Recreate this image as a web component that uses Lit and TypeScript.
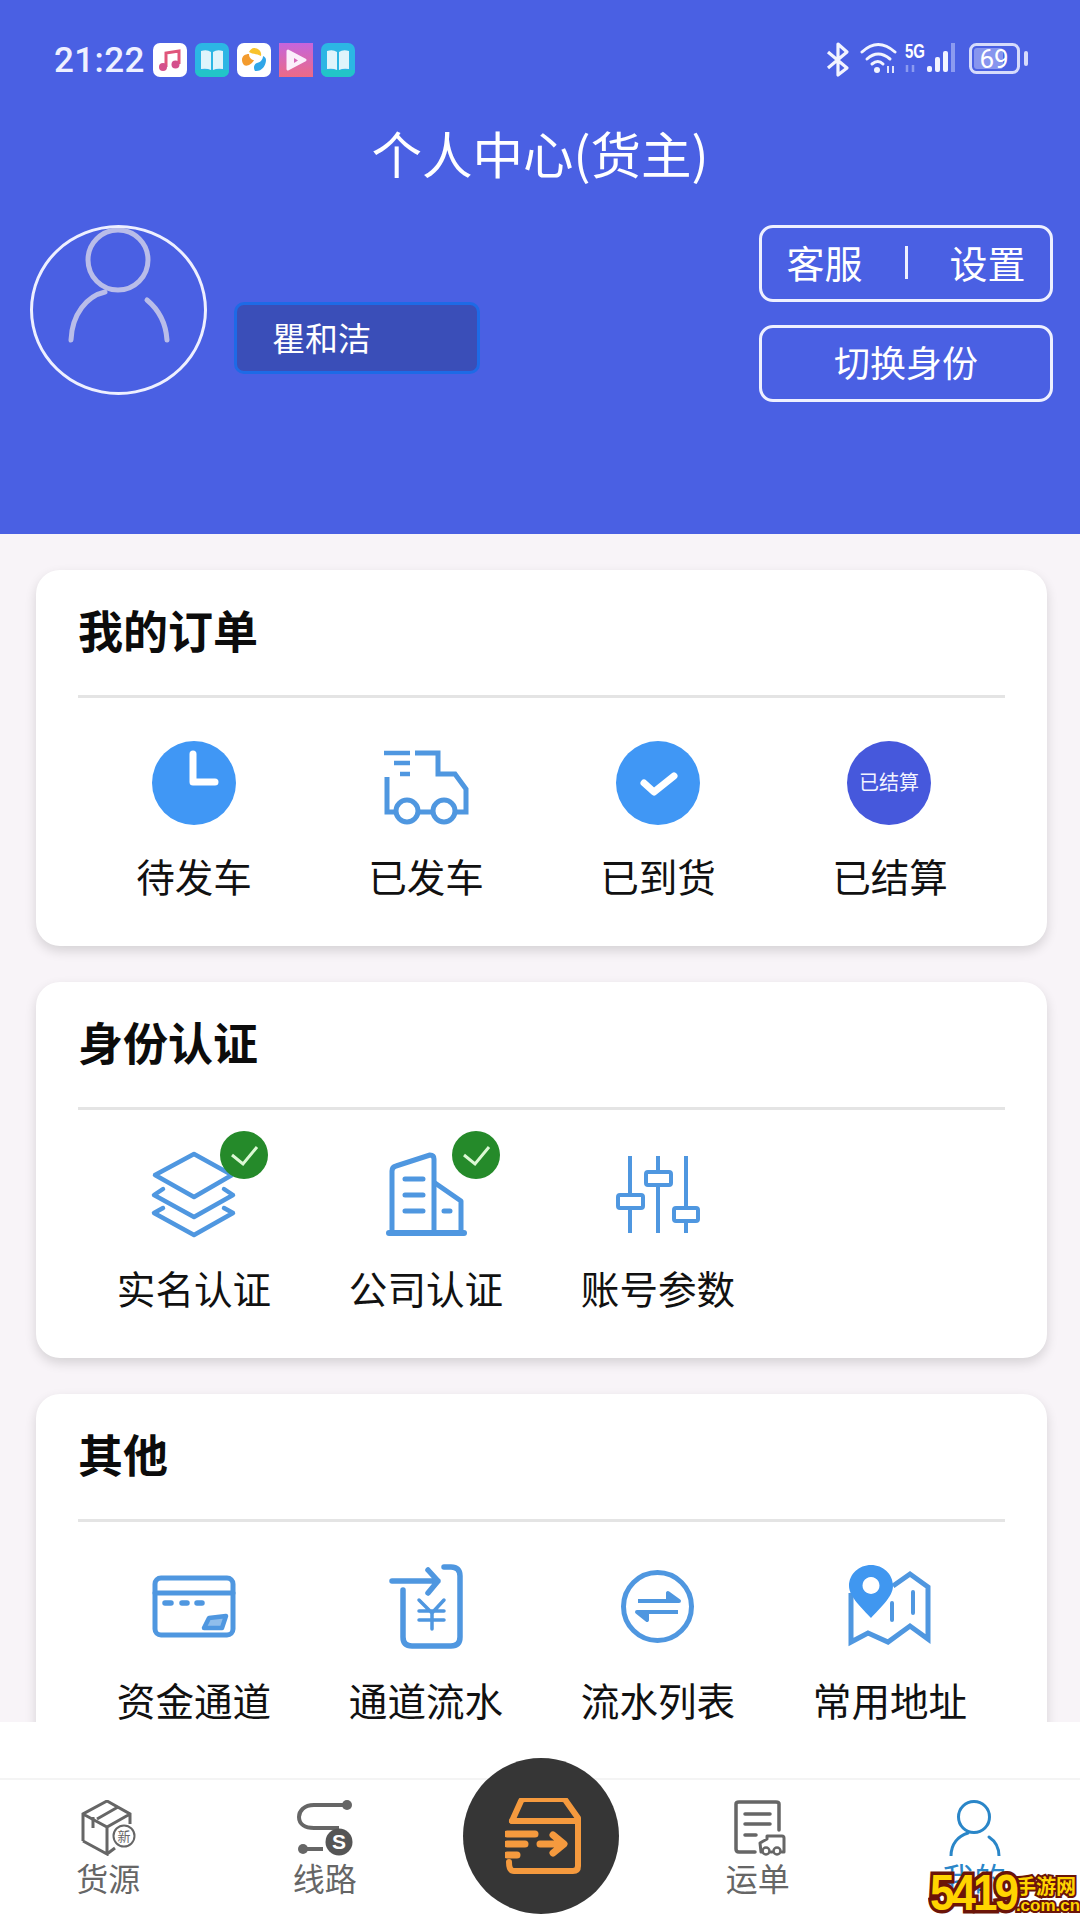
import { LitElement, html, css, svg } from 'lit';
import { customElement } from 'lit/decorators.js';

const clockIcon = svg`
  <circle cx="42" cy="42" r="42" fill="#4097f5" />
  <path d="M41 13V41H63" fill="none" stroke="#fff" stroke-width="7" stroke-linecap="round" stroke-linejoin="round" />`;

const truckIcon = svg`
  <g fill="none" stroke="#4f97e0" stroke-width="5">
    <path d="M0 12H26M10 22H26M16 33H26" stroke-width="4.5" />
    <path d="M31 12H54V33H71L82 48V71H71" />
    <path d="M3 36V71H12M34 71H49" />
    <circle cx="23" cy="70" r="11" />
    <circle cx="60" cy="70" r="11" />
  </g>`;

const checkIcon = svg`
  <circle cx="42" cy="42" r="42" fill="#4097f5" />
  <path d="M28 42L38 51L58 35" fill="none" stroke="#fff" stroke-width="7" stroke-linecap="round" stroke-linejoin="round" />`;

const settledIcon = svg`
  <circle cx="41" cy="42" r="42" fill="#4658dc" />
  <text class="settled" x="41" y="49" text-anchor="middle">已结算</text>`;

const layersIcon = svg`
  <g fill="none" stroke="#4f97e0" stroke-width="4.5" stroke-linejoin="round" stroke-linecap="round">
    <path d="M3 22L42 1L80 22L42 44Z" />
    <path d="M11 36L2 42L42 64L81 42L72 36" />
    <path d="M11 55L2 60L42 82L81 60L72 55" />
  </g>`;

const buildingIcon = svg`
  <g fill="none" stroke="#4f97e0" stroke-width="5" stroke-linecap="round" stroke-linejoin="round">
    <path d="M8 79V18Q8 14 12 13L46 2Q50 2 50 6V79" />
    <path d="M51 30L77 48V79" />
    <path d="M5 80H80" stroke-width="6" />
    <path d="M21 26H39M21 42H39M21 58H39M60 58H66" />
  </g>`;

const slidersIcon = svg`
  <g fill="#fff" stroke="#4f97e0" stroke-width="4">
    <path d="M14 3V80M42 3V80M70 3V80" fill="none" />
    <rect x="2" y="42" width="25" height="13" rx="2" />
    <rect x="30" y="19" width="25" height="13" rx="2" />
    <rect x="58" y="55" width="24" height="13" rx="2" />
  </g>`;

const cardIcon = svg`
  <g fill="none" stroke="#4f97e0" stroke-width="5" stroke-linecap="round">
    <rect x="3" y="13" width="78" height="57" rx="6" />
    <path d="M3 28H81" />
    <path d="M13 38H19M30 38H35M45 38H50" stroke-width="5.5" />
    <path d="M57 53L74 51L70 63H52Z" fill="#8fbdeb" stroke-width="4.5" stroke-linejoin="round" />
  </g>`;

const receiptIcon = svg`
  <g fill="none" stroke="#4f97e0" stroke-width="5.5" stroke-linecap="round" stroke-linejoin="round">
    <path d="M19 25V72Q19 81 28 81H67Q76 81 76 72V11Q76 2 67 2H60" />
    <path d="M8 16H54M44 5L54 16L44 28" />
    <path d="M35 35L48 48L60 35M35 46H60M35 55H60M48 48V64" stroke-width="3.5" />
  </g>`;

const swapIcon = svg`
  <circle cx="41.5" cy="41.5" r="34" fill="none" stroke="#4f97e0" stroke-width="5" />
  <path d="M22 36H63L52 28V36" fill="#4f97e0" stroke="#4f97e0" stroke-width="4" stroke-linejoin="round" />
  <path d="M62 47H21L31 55V47" fill="#4f97e0" stroke="#4f97e0" stroke-width="4" stroke-linejoin="round" />`;

const mapIcon = svg`
  <path d="M3 28V77L20 68L40 77L62 61L80 74V22L62 9L45 21" fill="none" stroke="#4f97e0" stroke-width="5" />
  <path d="M44 38V55M65 27V48" fill="none" stroke="#4f97e0" stroke-width="4" stroke-linecap="round" />
  <path fill-rule="evenodd" fill="#4097f0" d="M23 0C35 0 45 9 45 21C45 32 31 44 23 53C15 44 1 32 1 21C1 9 11 0 23 0ZM23 12A8.5 8.5 0 1 0 23.01 12Z" />`;

const boxTab = svg`
  <g fill="none" stroke="#666" stroke-width="3">
    <path d="M7 41V14L31 1L54 14V24M7 14L31 27L54 14M31 27V54L7 41M31 54L39 48" />
    <path d="M21 19L42 7M17 17V28" />
    <circle cx="48" cy="36" r="10.5" stroke-width="2" />
  </g>
  <text class="tiny" x="48" y="41" text-anchor="middle">新</text>`;

const routeTab = svg`
  <path d="M50 5H17C7 5 2 11 2 17C2 24 8 28 17 28H42M6 49H26" fill="none" stroke="#666" stroke-width="4" />
  <circle cx="50" cy="5" r="5" fill="#666" />
  <circle cx="6" cy="49" r="5" fill="#666" />
  <circle cx="42" cy="42" r="13.5" fill="#555" />
  <text class="badge-s" x="42" y="49" text-anchor="middle">S</text>`;

const waybillTab = svg`
  <g fill="none" stroke="#666" stroke-width="3.5" stroke-linecap="round" stroke-linejoin="round">
    <path d="M25 52H9Q6 52 6 49V4Q6 2 9 2H46Q49 2 49 4V30" />
    <path d="M15 14H40M15 24H40M15 35H26" />
    <path d="M32 52H31L30 43L37 39V36H52Q54 36 54 38V52H52M42 52H41" stroke-width="3" />
    <circle cx="36" cy="51" r="3.5" stroke-width="2.5" />
    <circle cx="47" cy="51" r="3.5" stroke-width="2.5" />
  </g>`;

const personTab = svg`
  <g fill="none" stroke="#2a86c8" stroke-width="3" stroke-linecap="round">
    <circle cx="28" cy="17" r="15.5" />
    <path d="M5 56C5 44 12 36 22 33M43 37C49 41 53 48 53 56" />
  </g>`;

const orders = [
  { label: '待发车', icon: clockIcon },
  { label: '已发车', icon: truckIcon },
  { label: '已到货', icon: checkIcon },
  { label: '已结算', icon: settledIcon },
];

const identity = [
  { label: '实名认证', icon: layersIcon, verified: true },
  { label: '公司认证', icon: buildingIcon, verified: true },
  { label: '账号参数', icon: slidersIcon },
];

const others = [
  { label: '资金通道', icon: cardIcon },
  { label: '通道流水', icon: receiptIcon },
  { label: '流水列表', icon: swapIcon },
  { label: '常用地址', icon: mapIcon },
];

const tabs = [
  { label: '货源', icon: boxTab, w: 64 },
  { label: '线路', icon: routeTab, w: 56 },
  null,
  { label: '运单', icon: waybillTab, w: 56 },
  { label: '我的', icon: personTab, w: 56, active: true },
];

@customElement('app-root')
export class AppRoot extends LitElement {
  static styles = css`
    :host {
      display: block;
      width: 1080px;
      height: 1920px;
      font-family: 'Noto Sans CJK SC', 'Noto Sans', sans-serif;
    }

    .page {
      position: relative;
      display: flex;
      flex-direction: column;
      height: 1920px;
      overflow: hidden;
      background: #f8f4f8;
    }

    .header {
      flex: 0 0 534px;
      display: flex;
      flex-direction: column;
      background: #4a60e3;
      color: #fff;
    }

    .status {
      display: flex;
      align-items: center;
      height: 34px;
      margin-top: 43px;
      padding: 0 52px 0 54px;
    }

    .time {
      width: 99px;
      font-family: Roboto, sans-serif;
      font-size: 35px;
      font-weight: 500;
      letter-spacing: 0.4px;
      color: #eef0ff;
    }

    .apps {
      display: flex;
      gap: 8px;
    }

    .apps svg {
      display: block;
      width: 34px;
      height: 34px;
    }

    .sys {
      display: flex;
      align-items: center;
      margin-left: auto;
    }

    .sys svg {
      display: block;
    }

    .five-g {
      position: absolute;
      top: 41px;
      left: 905px;
      font-family: 'Liberation Sans', sans-serif;
      font-size: 20px;
      font-weight: 700;
      line-height: 20px;
      transform: scaleX(0.75);
      transform-origin: left;
    }

    .title {
      margin: 45px 0 0;
      height: 60px;
      font-size: 50.5px;
      font-weight: 400;
      line-height: 60px;
      text-align: center;
    }

    .profile {
      display: flex;
      align-items: flex-start;
      margin-top: 43px;
      padding: 0 27px 0 30px;
    }

    .avatar {
      box-sizing: border-box;
      width: 177px;
      height: 170px;
      border: 3px solid #eef0ff;
      border-radius: 50%;
    }

    .avatar svg {
      display: block;
    }

    .name {
      box-sizing: border-box;
      width: 246px;
      height: 72px;
      margin: 77px 0 0 27px;
      padding-left: 35px;
      border: 3px solid #1e6ae6;
      border-radius: 10px;
      background: #3a4eb8;
      font-size: 33px;
      line-height: 64px;
    }

    .actions {
      display: flex;
      flex-direction: column;
      gap: 23px;
      width: 294px;
      margin-left: auto;
    }

    .action {
      box-sizing: border-box;
      display: flex;
      align-items: center;
      justify-content: center;
      height: 77px;
      padding-bottom: 5px;
      border: 3px solid #eef0ff;
      border-radius: 14px;
      font-size: 36px;
    }

    .action.pair {
      font-size: 38px;
    }

    .action .sep {
      width: 3px;
      height: 33px;
      margin: 2px 42px 0;
      background: #eef0ff;
    }

    .content {
      flex: 1;
      min-height: 0;
      overflow: hidden;
      display: flex;
      flex-direction: column;
      gap: 36px;
      padding: 36px 33px 0 36px;
    }

    .card {
      flex: 0 0 auto;
      padding: 0 42px 43px;
      border-radius: 24px;
      background: #fff;
      box-shadow: 0 5px 12px rgba(0, 0, 0, 0.14);
    }

    .card-title {
      box-sizing: border-box;
      display: flex;
      align-items: center;
      height: 128px;
      padding-bottom: 7px;
      border-bottom: 3px solid #e4e4e4;
      font-size: 45px;
      font-weight: 700;
      color: #0c0c0c;
    }

    .grid {
      display: grid;
      grid-template-columns: repeat(4, 232px);
      padding-top: 43px;
    }

    .item {
      display: flex;
      flex-direction: column;
      align-items: center;
    }

    .icon {
      position: relative;
      width: 84px;
      height: 84px;
    }

    .icon svg {
      display: block;
      overflow: visible;
    }

    .verified {
      position: absolute;
      top: -22px;
      left: 68px;
    }

    .label {
      margin-top: 25px;
      padding-bottom: 3px;
      font-size: 38.6px;
      line-height: 50px;
      color: #111;
      white-space: nowrap;
    }

    .settled {
      font-size: 20px;
      fill: #f2f3ff;
    }

    .spacer {
      flex: 0 0 56px;
      background: #fff;
    }

    .tabbar {
      flex: 0 0 142px;
      box-sizing: border-box;
      display: grid;
      grid-template-columns: repeat(5, 216.5px);
      padding-top: 20px;
      border-top: 2px solid #f4f4f4;
      background: #fff;
    }

    .tab {
      display: flex;
      flex-direction: column;
      align-items: center;
      font-size: 32px;
      line-height: 36px;
      color: #666;
    }

    .tab.active {
      color: #2a86c8;
    }

    .tab svg {
      display: block;
      margin-bottom: 3px;
    }

    .tiny {
      font-size: 13px;
      fill: #666;
    }

    .badge-s {
      font-family: 'Liberation Sans', sans-serif;
      font-size: 21px;
      font-weight: 700;
      fill: #fff;
    }

    .center {
      position: absolute;
      left: 463px;
      top: 1758px;
      width: 156px;
      height: 156px;
      display: flex;
      align-items: center;
      justify-content: center;
      border-radius: 50%;
      background: #363636;
    }

    .center svg {
      margin-left: 3px;
    }

    .mark {
      position: absolute;
      right: 0;
      bottom: 0;
      display: flex;
      width: 150px;
      height: 54px;
    }

    .mark-num {
      width: 88px;
      font-family: 'Liberation Sans', sans-serif;
      font-size: 44px;
      font-weight: 700;
      line-height: 54px;
      letter-spacing: -3px;
      color: #ffd400;
      -webkit-text-stroke: 6px #6b1408;
      paint-order: stroke fill;
      transform: scaleY(1.15);
      transform-origin: center 26px;
    }

    .mark-side {
      display: flex;
      flex-direction: column;
      padding-top: 8px;
      color: #ffd400;
      -webkit-text-stroke: 4px #6b1408;
      paint-order: stroke fill;
      font-weight: 700;
      white-space: nowrap;
    }

    .mark-cn {
      font-size: 20px;
      line-height: 23px;
    }

    .mark-com {
      font-family: 'Liberation Sans', sans-serif;
      font-size: 17px;
      line-height: 17px;
    }
  `;

  renderStatus() {
    return html`
      <div class="status">
        <span class="time">21:22</span>
        <div class="apps">
          <svg viewBox="0 0 34 34">
            <rect width="34" height="34" rx="7" fill="#fff" />
            <path d="M13 24V10L26 8V21" fill="none" stroke="#e0557a" stroke-width="3" />
            <circle cx="10" cy="24" r="4" fill="#d4508c" />
            <circle cx="22.5" cy="21.5" r="4" fill="#d4508c" />
          </svg>
          <svg viewBox="0 0 34 34">
            <rect width="34" height="34" rx="7" fill="#2cb6e4" />
            <path d="M0 27H34V27Q34 34 27 34H7Q0 34 0 27Z" fill="#22c4c8" />
            <path d="M6 8Q12 6 16 9V27Q12 25 6 26ZM18 9Q22 6 28 8V26Q22 25 18 27Z" fill="#dff4fb" />
          </svg>
          <svg viewBox="0 0 34 34">
            <rect width="34" height="34" rx="7" fill="#fff" />
            <path d="M17 5C22 5 25 9 24 13C20 11 15 11 12 9C13 7 15 5 17 5Z" fill="#f8c32c" />
            <path d="M5 17C5 13 8 11 12 11C12 15 15 17 17 17C15 21 10 24 7 22C6 21 5 19 5 17Z" fill="#f39b2d" />
            <path d="M29 17C29 23 24 29 18 28C16 25 17 21 20 20C24 19 26 16 26 13C28 14 29 15 29 17Z" fill="#2fa6e8" />
          </svg>
          <svg viewBox="0 0 34 34">
            <defs>
              <linearGradient id="vid" x1="0" y1="0" x2="0" y2="1">
                <stop offset="0" stop-color="#c565dd" />
                <stop offset="1" stop-color="#ec6a86" />
              </linearGradient>
            </defs>
            <rect width="34" height="34" fill="url(#vid)" />
            <path d="M9 8L26 17L9 26Z" fill="#fbeefb" stroke="#fbeefb" stroke-width="3" stroke-linejoin="round" />
            <path d="M15 15L19 17.5L15 20Z" fill="#d868b8" />
          </svg>
          <svg viewBox="0 0 34 34">
            <rect width="34" height="34" rx="7" fill="#2cb6e4" />
            <path d="M0 27H34V27Q34 34 27 34H7Q0 34 0 27Z" fill="#22c4c8" />
            <path d="M6 8Q12 6 16 9V27Q12 25 6 26ZM18 9Q22 6 28 8V26Q22 25 18 27Z" fill="#dff4fb" />
          </svg>
        </div>
        <div class="sys">
          <svg width="202" height="36" viewBox="826 43 202 36">
            <path d="M828 53L847 69L838 76V45L847 53L828 69" fill="none" stroke="#f2f4ff" stroke-width="3.2" stroke-linejoin="round" />
            <g fill="none" stroke="#f2f4ff" stroke-width="3" stroke-linecap="round">
              <path d="M862 53Q878 38 895 53" />
              <path d="M867 60Q878 50 890 60" />
              <path d="M872 65Q878 60 883 65" />
            </g>
            <circle cx="877" cy="71" r="3" fill="#f2f4ff" />
            <path d="M888 67V74M893 67V74" stroke="#f2f4ff" stroke-width="1.8" />
            <path d="M907 66V73M913 66V73" stroke="#8c9bf0" stroke-width="2.5" />
            <g fill="#f2f4ff">
              <rect x="927" y="67" width="5" height="6" rx="2" />
              <rect x="935" y="58" width="5" height="15" rx="2" />
              <rect x="943" y="52" width="5" height="21" rx="2" />
            </g>
            <rect x="951" y="44" width="4" height="29" fill="#8c9bf0" />
            <rect x="970.5" y="45.5" width="48" height="28" rx="6" fill="none" stroke="#d6dbfb" stroke-width="3" />
            <rect x="974" y="49" width="29" height="21" rx="3" fill="#8795ee" />
            <text x="994" y="69" text-anchor="middle" font-family="Roboto, sans-serif" font-size="26" fill="#fff">69</text>
            <rect x="1024" y="52" width="4" height="15" rx="2" fill="#d6dbfb" />
          </svg>
          <span class="five-g">5G</span>
        </div>
      </div>
    `;
  }

  renderCard(title: string, items: any[]) {
    return html`
      <section class="card">
        <div class="card-title">${title}</div>
        <div class="grid">
          ${items.map(
            (it) => html`
              <div class="item">
                <div class="icon">
                  <svg width="84" height="84" viewBox="0 0 84 84">${it.icon}</svg>
                  ${it.verified
                    ? html`<svg class="verified" width="48" height="48" viewBox="0 0 48 48">
                        <circle cx="24" cy="24" r="24" fill="#258a2a" />
                        <path d="M12 24L23 33L37 16" fill="none" stroke="#dcf8d4" stroke-width="3" />
                      </svg>`
                    : ''}
                </div>
                <div class="label">${it.label}</div>
              </div>
            `
          )}
        </div>
      </section>
    `;
  }

  render() {
    return html`
      <div class="page">
        <div class="header">
          ${this.renderStatus()}
          <h1 class="title">个人中心(货主)</h1>
          <div class="profile">
            <div class="avatar">
              <svg width="171" height="164" viewBox="0 0 171 164">
                <g fill="none" stroke="#b9bde9" stroke-width="5" stroke-linecap="round">
                  <circle cx="85" cy="32" r="30" />
                  <path d="M38 112C39 86 54 68 72 64M114 72C126 82 133 96 134 112" />
                </g>
              </svg>
            </div>
            <div class="name">瞿和洁</div>
            <div class="actions">
              <div class="action pair"><span>客服</span><span class="sep"></span><span>设置</span></div>
              <div class="action">切换身份</div>
            </div>
          </div>
        </div>
        <div class="content">
          ${this.renderCard('我的订单', orders)}
          ${this.renderCard('身份认证', identity)}
          ${this.renderCard('其他', others)}
        </div>
        <div class="spacer"></div>
        <div class="tabbar">
          ${tabs.map((t) =>
            t
              ? html`<div class="tab ${t.active ? 'active' : ''}">
                  <svg width=${t.w} height="56" viewBox="0 0 ${t.w} 56">${t.icon}</svg>
                  ${t.label}
                </div>`
              : html`<div></div>`
          )}
        </div>
        <div class="center">
          <svg width="76" height="76" viewBox="0 0 76 76">
            <g fill="none" stroke="#f59a3e" stroke-width="6" stroke-linecap="round" stroke-linejoin="round">
              <path d="M7 23L16 3Q17 1 20 1H57Q60 1 61 3L73 20V68Q73 73 68 73H9Q4 73 4 64" />
              <path d="M7 23H73" />
              <path d="M2 36H30M2 46H20M2 57H12" stroke-width="7" />
              <path d="M35 46H58M48 37L59 46L48 55" stroke-width="7" />
            </g>
          </svg>
        </div>
        <div class="mark">
          <div class="mark-num">5419</div>
          <div class="mark-side">
            <span class="mark-cn">手游网</span>
            <span class="mark-com">.com.cn</span>
          </div>
        </div>
      </div>
    `;
  }
}
